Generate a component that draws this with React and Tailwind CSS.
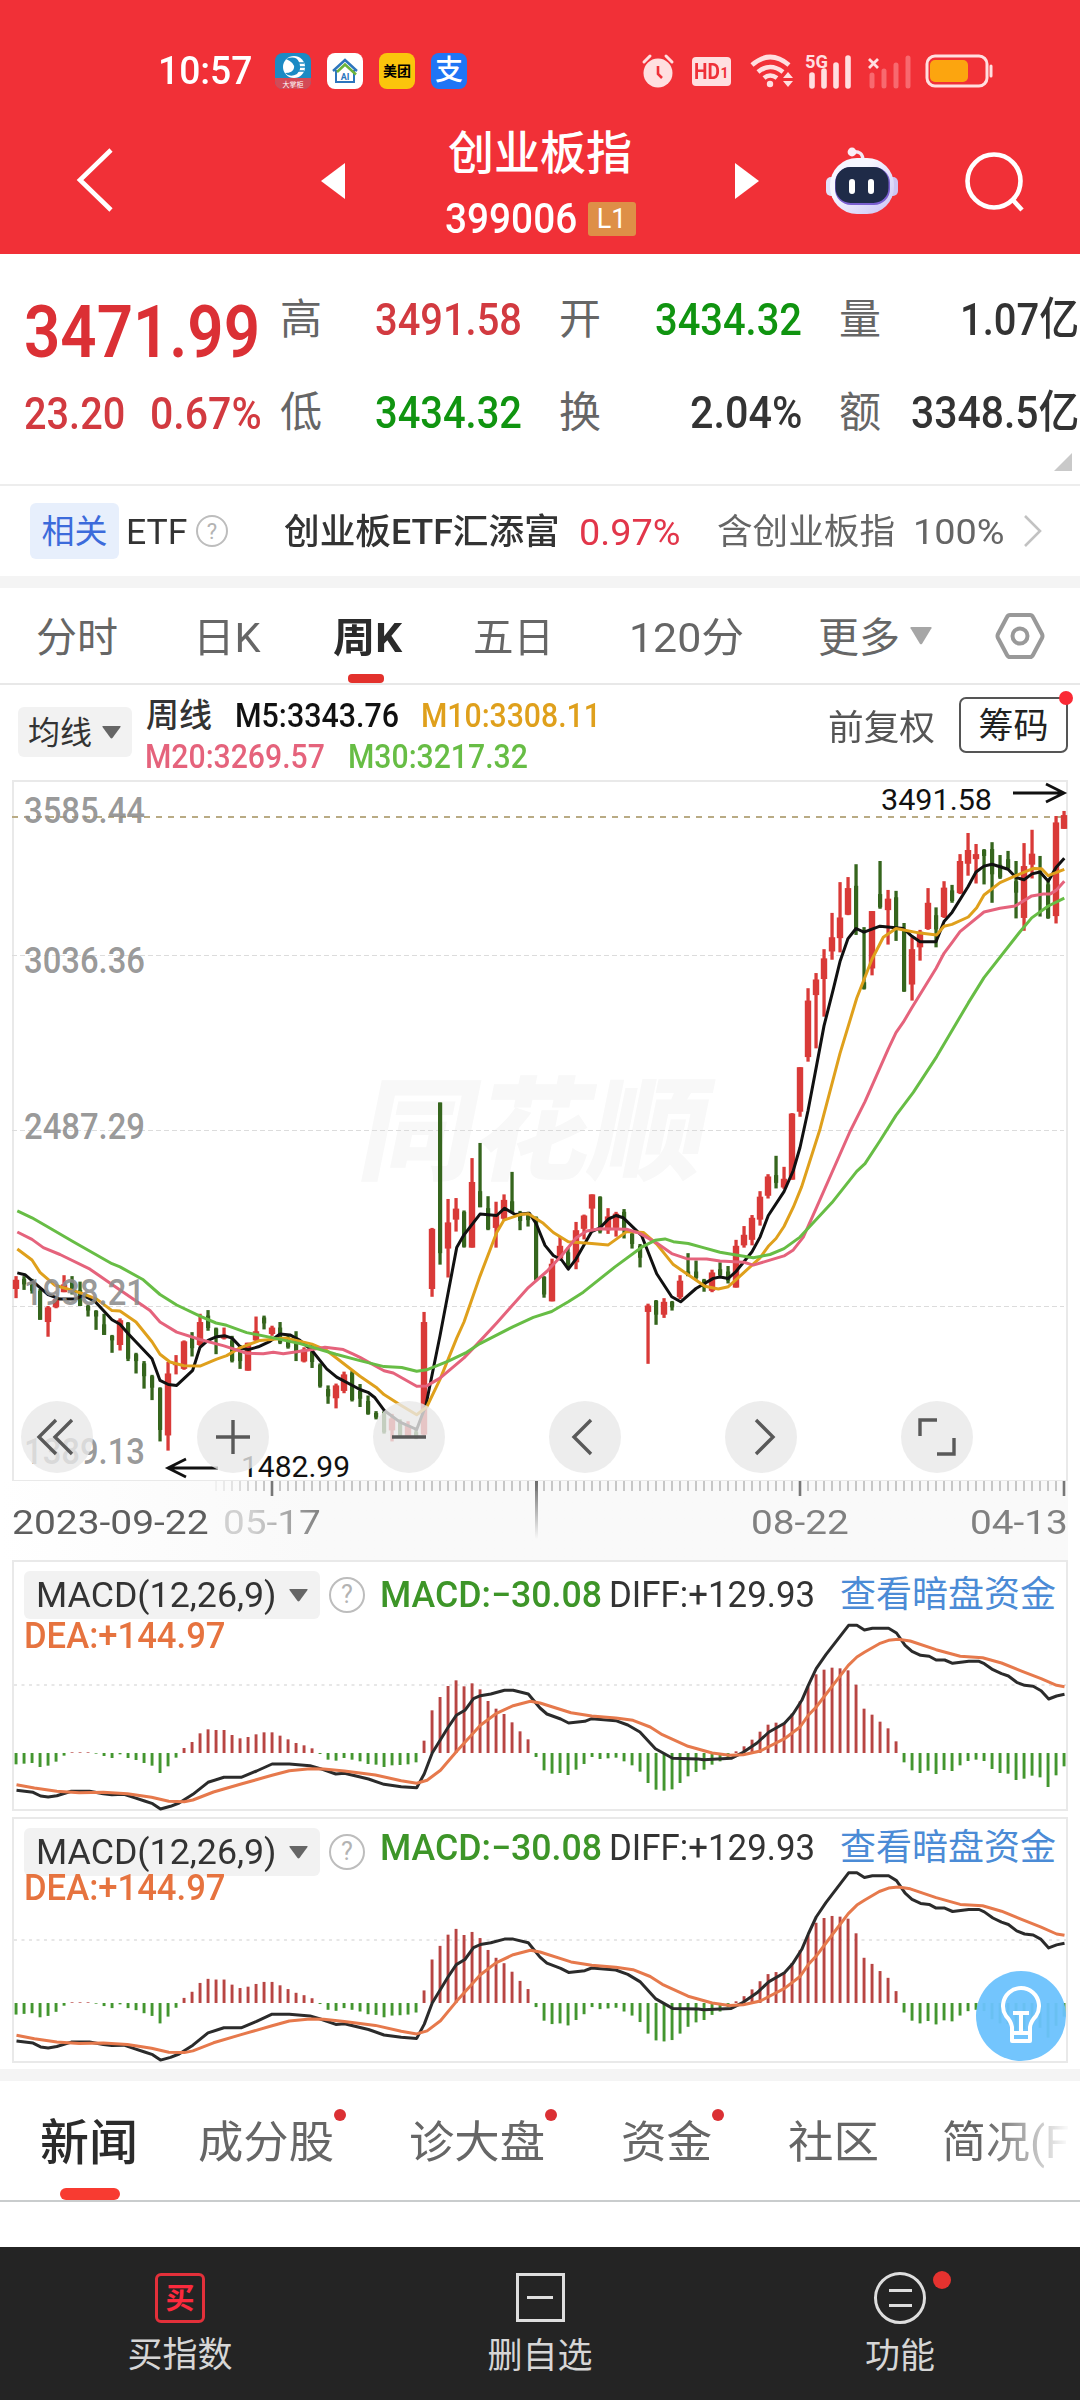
import React, { useLayoutEffect, useRef, useState } from 'react';
import clsx from 'clsx';

// [high, bodyTop, bodyBottom, low, up?] per week, in plot units
const CANDLES = [
  [1100, 1108, 1128, 1148, 1], [1100, 1106, 1118, 1130, 0], [1106, 1118, 1132, 1138, 0], [1128, 1132, 1195, 1195, 0],
  [1165, 1168, 1200, 1232, 1], [1148, 1150, 1168, 1170, 1], [1098, 1118, 1135, 1135, 1], [1100, 1112, 1132, 1140, 0],
  [1112, 1130, 1165, 1165, 0], [1163, 1165, 1175, 1188, 0], [1174, 1176, 1188, 1217, 0], [1182, 1205, 1228, 1228, 0],
  [1228, 1230, 1240, 1267, 0], [1192, 1196, 1250, 1262, 1], [1200, 1202, 1280, 1285, 0], [1267, 1270, 1285, 1312, 0],
  [1285, 1290, 1318, 1345, 0], [1315, 1318, 1343, 1370, 0], [1342, 1344, 1435, 1460, 0], [1287, 1312, 1447, 1480, 1],
  [1272, 1290, 1294, 1314, 1], [1240, 1242, 1302, 1304, 1], [1222, 1234, 1257, 1275, 0], [1182, 1200, 1250, 1252, 1],
  [1174, 1186, 1213, 1219, 0], [1212, 1214, 1230, 1270, 0], [1212, 1228, 1236, 1238, 1], [1230, 1240, 1285, 1288, 0],
  [1250, 1258, 1285, 1302, 0], [1245, 1245, 1306, 1306, 1], [1188, 1220, 1240, 1242, 1], [1186, 1190, 1203, 1216, 0],
  [1208, 1212, 1226, 1230, 1], [1200, 1212, 1245, 1248, 0], [1226, 1240, 1255, 1258, 0], [1220, 1240, 1268, 1285, 0],
  [1255, 1260, 1286, 1288, 1], [1248, 1265, 1287, 1300, 0], [1290, 1293, 1340, 1343, 0], [1338, 1346, 1362, 1378, 0],
  [1334, 1338, 1366, 1388, 1], [1308, 1314, 1350, 1355, 1], [1306, 1310, 1370, 1373, 0], [1335, 1350, 1367, 1385, 0],
  [1360, 1372, 1400, 1402, 0], [1394, 1398, 1408, 1412, 0], [1394, 1396, 1440, 1443, 0], [1400, 1410, 1436, 1460, 1],
  [1412, 1420, 1447, 1449, 0], [1416, 1425, 1450, 1452, 1], [1430, 1440, 1452, 1455, 0], [1178, 1200, 1445, 1447, 1],
  [995, 997, 1128, 1145, 1], [722, 722, 1050, 1075, 0], [932, 983, 1040, 1103, 1], [930, 953, 977, 1003, 1],
  [957, 960, 1036, 1038, 0], [843, 895, 1038, 1038, 1], [810, 915, 950, 950, 0], [926, 952, 998, 1000, 0],
  [938, 965, 995, 1038, 1], [922, 934, 975, 980, 1], [873, 937, 962, 962, 0], [958, 962, 980, 1000, 0],
  [960, 965, 978, 992, 0], [970, 972, 1108, 1110, 0], [1100, 1102, 1140, 1147, 0], [1062, 1073, 1155, 1155, 1],
  [1014, 1034, 1062, 1064, 1], [1038, 1048, 1075, 1080, 0], [982, 1000, 1070, 1085, 1], [966, 968, 997, 1020, 1],
  [922, 922, 953, 1000, 1], [926, 928, 1003, 1007, 0], [952, 970, 1000, 1008, 1], [960, 964, 995, 1014, 1],
  [954, 960, 1000, 1018, 0], [1000, 1008, 1030, 1040, 0], [1030, 1034, 1060, 1081, 0], [1160, 1164, 1178, 1291, 1],
  [1152, 1154, 1184, 1206, 0], [1148, 1156, 1184, 1191, 1], [1154, 1156, 1168, 1175, 0], [1098, 1110, 1146, 1150, 1],
  [1050, 1090, 1100, 1100, 0], [1066, 1090, 1104, 1108, 0], [1106, 1108, 1124, 1134, 0], [1086, 1092, 1132, 1135, 1],
  [1070, 1085, 1098, 1104, 0], [1078, 1090, 1110, 1116, 0], [1021, 1034, 1125, 1125, 1], [991, 1010, 1033, 1038, 1],
  [967, 973, 1021, 1033, 1], [915, 927, 977, 990, 1], [878, 883, 925, 931, 1], [838, 880, 897, 909, 0],
  [862, 888, 907, 910, 1], [745, 746, 890, 890, 1], [645, 645, 742, 753, 1], [473, 500, 623, 633, 1],
  [440, 454, 488, 604, 1], [388, 408, 453, 535, 1], [309, 362, 393, 411, 1], [242, 319, 364, 395, 1],
  [231, 255, 313, 314, 1], [203, 250, 345, 357, 0], [340, 460, 474, 476, 0], [305, 305, 430, 445, 1],
  [196, 268, 297, 300, 0], [259, 278, 303, 378, 1], [261, 275, 345, 370, 0], [331, 345, 480, 481, 0],
  [362, 388, 465, 500, 1], [346, 350, 384, 413, 1], [255, 287, 344, 346, 1], [297, 314, 345, 384, 0],
  [240, 254, 318, 320, 1], [248, 260, 283, 287, 0], [181, 196, 266, 268, 1], [135, 172, 202, 228, 1],
  [159, 181, 192, 245, 1], [170, 172, 185, 247, 0], [155, 170, 225, 287, 0], [183, 204, 232, 235, 0],
  [174, 192, 212, 214, 0], [196, 240, 265, 321, 0], [157, 207, 320, 348, 1], [128, 180, 204, 234, 1],
  [185, 218, 224, 317, 0], [240, 247, 320, 322, 0], [98, 112, 316, 332, 1], [87, 96, 126, 126, 1],
];

const MA_LINES = [
  {
    color: '#111111',
    points: '52,1093 75,1097 120,1125 144,1140 180,1150 225,1150 250,1142 285,1155 336,1195 360,1205 384,1225 456,1280 480,1327 505,1336 530,1338 578,1305 600,1255 624,1240 650,1232 675,1230 696,1235 725,1257 745,1260 775,1254 810,1242 840,1226 870,1228 900,1240 936,1262 980,1302 1010,1320 1080,1347 1104,1353 1125,1365 1152,1392 1200,1418 1250,1434 1278,1380 1320,1230 1370,1038 1392,1010 1440,965 1490,968 1514,952 1545,966 1588,963 1608,985 1635,1033 1660,1055 1685,1065 1705,1085 1728,1063 1775,1003 1800,995 1825,976 1848,968 1870,973 1925,1012 1970,1095 2015,1145 2042,1156 2088,1127 2140,1105 2160,1102 2185,1105 2208,1090 2256,1047 2280,1015 2305,968 2352,916 2380,870 2400,820 2424,740 2450,640 2472,555 2500,475 2520,415 2544,365 2568,343 2592,351 2640,338 2710,343 2736,360 2760,372 2808,372 2832,328 2856,308 2904,252 2928,220 2952,207 2976,203 3024,214 3048,232 3072,237 3096,224 3120,220 3145,240 3168,210 3193,190',
  },
  {
    color: '#dfa01c',
    points: '52,1041 96,1065 120,1092 165,1120 240,1136 290,1150 336,1175 360,1176 408,1200 456,1243 480,1270 510,1287 552,1295 600,1296 650,1281 680,1273 720,1256 780,1240 860,1235 936,1248 980,1262 1080,1318 1128,1342 1152,1358 1200,1380 1250,1402 1280,1385 1320,1325 1370,1235 1392,1200 1440,1100 1490,1005 1512,978 1560,966 1585,964 1630,985 1660,1005 1705,1025 1775,1029 1825,1032 1880,1003 1930,1005 1970,1030 2020,1075 2060,1095 2115,1122 2155,1128 2185,1123 2220,1100 2280,1060 2305,1035 2328,1018 2352,992 2380,950 2405,905 2460,780 2520,615 2570,495 2616,410 2650,362 2688,343 2760,353 2810,357 2832,338 2856,334 2905,318 2930,298 2952,270 3000,243 3048,228 3100,212 3125,213 3145,228 3193,214',
  },
  {
    color: '#e5637c',
    points: '52,1004 96,1020 130,1038 180,1053 270,1085 360,1130 450,1175 480,1200 530,1222 600,1238 672,1252 740,1268 790,1269 820,1266 850,1269 936,1260 975,1255 1030,1260 1060,1270 1080,1277 1152,1306 1180,1311 1250,1340 1280,1339 1320,1322 1392,1278 1425,1253 1490,1202 1585,1125 1640,1090 1685,1055 1728,1017 1760,1002 1800,997 1880,998 1920,1007 1970,1028 2015,1051 2060,1062 2120,1063 2160,1067 2232,1070 2260,1076 2352,1056 2380,1043 2410,1015 2450,950 2550,785 2595,720 2665,605 2688,570 2710,547 2736,515 2808,430 2832,397 2856,374 2880,350 2952,307 3000,299 3045,294 3095,272 3130,268 3150,268 3168,260 3193,240',
  },
  {
    color: '#67bd45',
    points: '52,958 96,973 144,993 220,1025 336,1073 360,1080 430,1108 480,1140 530,1163 600,1187 648,1202 680,1207 740,1223 830,1236 900,1247 1008,1270 1080,1284 1152,1297 1205,1299 1250,1307 1280,1304 1345,1285 1400,1266 1440,1247 1540,1210 1600,1190 1655,1177 1705,1156 1750,1135 1845,1080 1925,1037 1965,1022 1995,1019 2020,1025 2065,1029 2110,1038 2160,1048 2208,1054 2260,1060 2310,1053 2352,1040 2400,1015 2496,940 2570,872 2595,855 2640,805 2688,750 2740,700 2810,622 2905,505 2952,450 3060,350 3095,320 3145,294 3193,277',
  },
];

const MACD_BARS = [
  -34, -32, -30, -42, -38, -26, -8, 2, 2, 2, -2, -9, -15, -4, -15, -21, -30, -38, -60, -40, -14, 15, 33, 59, 71, 69, 69, 54, 44, 48,
  56, 62, 62, 52, 41, 30, 23, 14, -3, -20, -23, -15, -20, -25, -33, -35, -42, -37, -36, -34, -28, 37, 128, 168, 201, 218, 200, 209,
  191, 156, 133, 117, 92, 65, 41, -12, -52, -62, -60, -66, -50, -33, -12, -18, -16, -14, -25, -37, -56, -90, -110, -113, -109, -90,
  -70, -57, -50, -35, -25, -12, 5, 20, 40, 64, 85, 91, 90, 118, 155, 200, 236, 250, 256, 254, 248, 205, 133, 115, 94, 74, 35, -28,
  -52, -60, -53, -63, -51, -54, -37, -24, -20, -24, -48, -60, -62, -81, -77, -68, -73, -102, -67, -40,
];

const DIFF =
  '48,720 96,726 118,737 140,740 165,736 207,723 260,723 300,730 325,733 360,732 390,742 420,752 443,760 466,776 495,768 520,758 560,732 604,696 650,681 700,681 745,662 790,641 840,641 900,646 930,655 975,671 1000,669 1070,686 1115,702 1165,709 1210,712 1232,670 1255,608 1300,533 1325,495 1350,480 1375,445 1395,436 1425,431 1465,420 1490,420 1534,431 1568,473 1588,491 1628,506 1651,518 1698,513 1718,505 1788,511 1823,524 1858,545 1903,595 1953,624 2028,626 2043,628 2123,624 2158,606 2198,578 2233,545 2278,519 2303,490 2328,450 2347,405 2370,355 2398,313 2464,225 2488,225 2510,239 2533,234 2580,234 2603,248 2628,285 2648,303 2673,315 2698,318 2718,329 2743,329 2766,339 2813,333 2843,333 2858,340 2883,358 2908,370 2928,377 2952,396 2975,405 3000,408 3023,421 3045,446 3068,437 3091,432';

const DEA =
  '48,703 100,713 165,723 230,727 300,726 370,730 440,741 490,753 535,754 560,749 620,725 700,701 790,675 840,661 900,655 940,656 1000,662 1090,674 1165,691 1210,699 1240,690 1279,660 1325,604 1395,525 1440,490 1490,466 1540,453 1568,458 1658,487 1718,497 1788,503 1838,510 1888,530 1923,553 1998,588 2068,608 2118,615 2158,613 2208,602 2278,565 2323,530 2347,495 2370,470 2418,405 2463,345 2488,320 2510,306 2553,280 2580,270 2608,267 2643,272 2718,298 2788,318 2853,322 2908,338 2968,363 3023,385 3068,405 3091,409';

const UP = '#d93a38';
const DOWN = '#35651d';

function project(points, fx, fy) {
  return points
    .split(' ')
    .map((p) => {
      const [x, y] = p.split(',').map(Number);
      return `${fx(x).toFixed(1)},${fy(y).toFixed(1)}`;
    })
    .join(' ');
}

// Squeezes or stretches a single line of text to the width of its box.
function Fit({ className, children }) {
  const box = useRef(null);
  const text = useRef(null);
  const [scale, setScale] = useState(1);

  useLayoutEffect(() => {
    setScale(box.current.clientWidth / text.current.offsetWidth);
  }, [children]);

  return (
    <div ref={box} className={clsx('shrink-0 whitespace-nowrap flex', className)}>
      <span ref={text} className="inline-block shrink-0 origin-left" style={{ transform: `scaleX(${scale})` }}>
        {children}
      </span>
    </div>
  );
}

function Caret({ className }) {
  return (
    <svg viewBox="0 0 20 14" className={className} preserveAspectRatio="none">
      <path d="M1 0h18q1 0 .5 1L11 13q-1 1-2 0L.5 1Q0 0 1 0Z" fill="currentColor" />
    </svg>
  );
}

function Help({ className }) {
  return (
    <div className={clsx('shrink-0 rounded-full border-2 border-[#bdbdbd] text-[#b3b3b3] flex items-center justify-center', className)}>
      ?
    </div>
  );
}

function StatusBar() {
  return (
    <div className="mt-[48px] h-[46px] flex items-center text-white">
      <Fit className="ml-[158px] w-[94px] text-[38px] leading-[46px] font-medium">10:57</Fit>
      <svg width="36" height="36" viewBox="0 0 36 36" className="ml-[23px]">
        <rect width="36" height="36" rx="8" fill="#1b8ac4" />
        <path d="M0 25h36v3q0 8-8 8H8q-8 0-8-8Z" fill="#d34a56" />
        <circle cx="19" cy="14" r="11" fill="#fff" />
        <path d="M11 6q10-4 13 3t-2 12q-7 4-12-1 8 0 9-5t-8-9Z" fill="#1b8ac4" />
        <path d="M22 10h7M22 14h8M21 18h8" stroke="#1b8ac4" strokeWidth="1.4" />
        <text x="18" y="34" fontSize="7" textAnchor="middle" fill="#fff">大掌柜</text>
      </svg>
      <svg width="36" height="36" viewBox="0 0 36 36" className="ml-[16px]">
        <rect width="36" height="36" rx="8" fill="#fff" />
        <path d="M9 17v12h18V17" fill="none" stroke="#2c75bd" strokeWidth="2" />
        <path d="m6 18 12-11 12 11" fill="none" stroke="#2c75bd" strokeWidth="2.4" />
        <path d="m10 19 8-7.5 11 10" fill="none" stroke="#6cb43c" strokeWidth="2.6" />
        <text x="18" y="27" fontSize="9" fontWeight="700" textAnchor="middle" fill="#2c75bd">AI</text>
      </svg>
      <div className="ml-[16px] w-[36px] h-[36px] rounded-[8px] bg-[#fbc50c] text-black text-[14px] font-bold flex items-center justify-center">
        美团
      </div>
      <div className="ml-[16px] w-[36px] h-[36px] rounded-[8px] bg-[#1f75f5] text-[28px] leading-[34px] font-medium flex items-center justify-center">
        支
      </div>
      <svg width="34" height="36" viewBox="0 0 34 36" className="ml-[174px] text-[#ffdfe0]">
        <circle cx="17" cy="20" r="14.5" fill="currentColor" />
        <path d="M3 9 9 3M31 9l-6-6" stroke="currentColor" strokeWidth="3" strokeLinecap="round" />
        <path d="M17 13v8l4 4" fill="none" stroke="#ef3038" strokeWidth="2.6" />
      </svg>
      <div className="ml-[17px] w-[39px] h-[29px] rounded-[4px] bg-[#ffdfe0] text-[#ef3038] text-[22px] leading-[29px] font-bold flex items-center justify-center">
        <Fit className="w-[26px]">HD</Fit>
        <span className="text-[14px] pt-[5px]">1</span>
      </div>
      <svg width="46" height="36" viewBox="0 0 46 36" className="ml-[19px] text-[#ffdfe0]">
        <path d="M2 12q18-16 37 0M8 19q12-10 25 0M14 25q6-5 13 0" fill="none" stroke="currentColor" strokeWidth="4.6" />
        <circle cx="20" cy="31" r="3.2" fill="currentColor" />
        <path d="m33 25 5-6 5 6ZM33 28l5 6 5-6Z" fill="currentColor" />
      </svg>
      <svg width="48" height="36" viewBox="0 0 48 36" className="ml-[9px] overflow-visible text-[#ffdfe0]">
        <text x="0" y="15" fontSize="19" fontWeight="700" fill="currentColor" textLength="23" lengthAdjust="spacingAndGlyphs">5G</text>
        <path d="M7 33V22M19 33V18M31 33V12M43 33V5" stroke="currentColor" strokeWidth="5.6" strokeLinecap="round" />
      </svg>
      <svg width="46" height="36" viewBox="0 0 46 36" className="ml-[14px] text-[#ffdfe0]">
        <path d="m2 6 9 9M11 6l-9 9" stroke="currentColor" strokeWidth="2.8" />
        <path d="M5 33V22M17 33V18M29 33V12M41 33V5" stroke="#f8696f" strokeWidth="5" strokeLinecap="round" />
      </svg>
      <svg width="70" height="36" viewBox="0 0 70 36" className="ml-[12px]">
        <rect x="2" y="3" width="60" height="30" rx="8" fill="none" stroke="#ffdfe0" strokeWidth="3" />
        <rect x="5" y="7" width="38" height="22" rx="5" fill="#fca50f" />
        <path d="M66 13v10" stroke="#ffdfe0" strokeWidth="3" strokeLinecap="round" />
      </svg>
    </div>
  );
}

function Robot() {
  return (
    <svg width="76" height="72" viewBox="0 0 76 72" className="ml-[65px] -mt-[4px]">
      <defs>
        <linearGradient id="shell" x1="0" y1="0" x2="1" y2="1">
          <stop offset="0.35" stopColor="#f6f6ff" />
          <stop offset="1" stopColor="#c9c2f5" />
        </linearGradient>
      </defs>
      <path d="M28 9q11-2 11 9" fill="none" stroke="#f3e9f5" strokeWidth="3.4" strokeLinecap="round" />
      <circle cx="28" cy="9" r="4.4" fill="#fbeef6" />
      <rect x="2" y="34" width="12" height="19" rx="5" fill="#e2e2fa" />
      <rect x="62" y="34" width="12" height="19" rx="5" fill="#cdc4f3" />
      <rect x="6" y="15" width="64" height="56" rx="27" fill="url(#shell)" />
      <rect x="11" y="24" width="55" height="38" rx="16" fill="#7a5fd0" />
      <rect x="11.5" y="24" width="53" height="36" rx="15" fill="#1f2b48" />
      <path d="M28 39v9M47 39v9" stroke="#fff" strokeWidth="6" strokeLinecap="round" />
    </svg>
  );
}

function NavBar() {
  return (
    <div className="h-[160px] pt-[14px] flex items-center text-white">
      <svg width="44" height="68" viewBox="0 0 44 68" className="ml-[73px] -mt-[3px]">
        <path d="M38 4 7 34l31 30" fill="none" stroke="currentColor" strokeWidth="4.6" />
      </svg>
      <svg width="24" height="36" viewBox="0 0 24 36" className="ml-[204px]">
        <path d="M24 0v36L0 18Z" fill="currentColor" />
      </svg>
      <div className="ml-[80px] mr-[80px] mt-[3px] w-[230px] flex flex-col items-center">
        <div className="text-[46px] leading-[46px] font-medium">创业板指</div>
        <div className="mt-[26px] h-[34px] flex items-center">
          <Fit className="w-[132px] text-[42px] leading-[34px] font-medium">399006</Fit>
          <div className="ml-[11px] w-[48px] h-[34px] rounded-[3px] bg-[#de8f47] text-[27px] leading-[34px] text-center">L1</div>
        </div>
      </div>
      <svg width="24" height="36" viewBox="0 0 24 36">
        <path d="M0 0v36l24-18Z" fill="currentColor" />
      </svg>
      <Robot />
      <svg width="66" height="66" viewBox="0 0 66 66" className="ml-[62px] mt-[3px]">
        <circle cx="32" cy="31" r="26.5" fill="none" stroke="currentColor" strokeWidth="4.6" />
        <path d="m50 49 10 11" stroke="currentColor" strokeWidth="4.6" />
      </svg>
    </div>
  );
}

function QuoteCell({ label, value, color, width }) {
  return (
    <div className="flex items-center justify-between">
      <span className="text-[42px] leading-[46px] text-[#666]">{label}</span>
      <Fit className={clsx('text-[45px] leading-[46px] font-medium', color, width)}>{value}</Fit>
    </div>
  );
}

function QuotePanel() {
  return (
    <div className="h-[232px] shrink-0 border-b-2 border-[#ededed] relative flex">
      <div className="ml-[24px] w-[240px] pt-[37px] text-[#db3035]">
        <Fit className="w-[236px] text-[73px] leading-[82px] font-semibold">3471.99</Fit>
        <div className="mt-[18px] flex gap-[25px] text-[#d23a40]">
          <Fit className="w-[101px] text-[44px] leading-[46px] font-medium">23.20</Fit>
          <Fit className="w-[112px] text-[44px] leading-[46px] font-medium">0.67%</Fit>
        </div>
      </div>
      <div className="ml-[16px] pt-[43px] grid grid-cols-[242px_243px_240px] auto-rows-[46px] gap-x-[37px] gap-y-[47px]">
        <QuoteCell label="高" value="3491.58" color="text-[#d23a40]" width="w-[147px]" />
        <QuoteCell label="开" value="3434.32" color="text-[#109410]" width="w-[147px]" />
        <QuoteCell label="量" value="1.07亿" color="text-[#333]" width="w-[119px]" />
        <QuoteCell label="低" value="3434.32" color="text-[#109410]" width="w-[147px]" />
        <QuoteCell label="换" value="2.04%" color="text-[#333]" width="w-[112px]" />
        <QuoteCell label="额" value="3348.5亿" color="text-[#333]" width="w-[168px]" />
      </div>
      <svg width="18" height="18" viewBox="0 0 18 18" className="absolute right-[8px] bottom-[13px]">
        <path d="M18 0v18H0Z" fill="#c9c9c9" />
      </svg>
    </div>
  );
}

function RelatedRow() {
  return (
    <div className="h-[90px] shrink-0 flex items-center text-[#333]">
      <div className="ml-[30px] w-[89px] h-[56px] rounded-[6px] bg-[#e7effc] text-[#3c6bdb] text-[33px] leading-[58px] text-center">相关</div>
      <Fit className="ml-[7px] w-[61px] pt-[3px] text-[35px] leading-[50px]">ETF</Fit>
      <Help className="ml-[9px] w-[32px] h-[32px] text-[22px]" />
      <Fit className="ml-[56px] w-[276px] pt-[3px] text-[35px] leading-[50px] font-medium">创业板ETF汇添富</Fit>
      <Fit className="ml-[19px] w-[102px] pt-[3px] text-[36px] leading-[50px] text-[#e2364a]">0.97%</Fit>
      <Fit className="ml-[36px] w-[178px] pt-[3px] text-[35px] leading-[50px] text-[#666]">含创业板指</Fit>
      <Fit className="ml-[18px] w-[92px] pt-[3px] text-[35px] leading-[50px] text-[#666]">100%</Fit>
      <svg width="20" height="34" viewBox="0 0 20 34" className="ml-[18px]">
        <path d="m2 2 15 15L2 32" fill="none" stroke="#c2c2c2" strokeWidth="2.6" />
      </svg>
    </div>
  );
}

function PeriodTabs() {
  return (
    <div className="h-[97px] shrink-0 border-b-2 border-[#e8e8e8] flex text-[41px] leading-[100px] text-[#666]">
      <span className="ml-[36px] w-[83px]">分时</span>
      <Fit className="ml-[74px] w-[68px]">日K</Fit>
      <div className="ml-[72px] w-[69px] relative text-[#2b2b2b] font-bold">
        <Fit className="w-[69px]">周K</Fit>
        <div className="absolute left-[15px] bottom-0 w-[36px] h-[9px] rounded-[4px] bg-[#e3312c]" />
      </div>
      <Fit className="ml-[71px] w-[81px]">五日</Fit>
      <Fit className="ml-[75px] w-[115px]">120分</Fit>
      <span className="ml-[74px] w-[83px]">更多</span>
      <Caret className="ml-[9px] mt-[39px] w-[22px] h-[18px] text-[#a6a6a6]" />
      <svg width="50" height="48" viewBox="0 0 50 48" className="ml-[63px] mt-[24px]">
        <path d="M15 3h20q2 0 3 2l9 17q1 2 0 4l-9 17q-1 2-3 2H15q-2 0-3-2L3 26q-1-2 0-4l9-17q1-2 3-2Z" fill="none" stroke="#999" strokeWidth="4" />
        <circle cx="25" cy="24" r="7.5" fill="none" stroke="#999" strokeWidth="4" />
      </svg>
    </div>
  );
}

function MaBar() {
  return (
    <div className="h-[93px] shrink-0 flex">
      <div className="ml-[18px] mt-[22px] w-[114px] h-[50px] rounded-[6px] bg-[#f2f2f2] text-[#333] text-[32px] leading-[50px] flex items-center">
        <span className="ml-[10px] pt-[2px]">均线</span>
        <Caret className="ml-[10px] w-[19px] h-[13px] text-[#666]" />
      </div>
      <div className="ml-[14px] mt-[10px] w-[460px] text-[33px] leading-[41px]">
        <div className="flex font-medium text-[#333]">
          <Fit className="w-[66px]">周线</Fit>
          <Fit className="ml-[23px] w-[164px] text-[#111]">M5:3343.76</Fit>
          <Fit className="ml-[22px] w-[180px] text-[#dfa01c]">M10:3308.11</Fit>
        </div>
        <div className="flex font-medium">
          <Fit className="-ml-[1px] w-[180px] text-[#e5637c]">M20:3269.57</Fit>
          <Fit className="ml-[23px] w-[180px] text-[#67bd45]">M30:3217.32</Fit>
        </div>
      </div>
      <Fit className="ml-[222px] mt-[19px] w-[107px] text-[35px] leading-[50px] text-[#555]">前复权</Fit>
      <div className="relative ml-[24px] mt-[12px] w-[109px] h-[56px] rounded-[7px] border-2 border-[#555] text-[#222] text-[35px] leading-[56px] text-center">
        筹码
        <div className="absolute -right-[7px] -top-[8px] w-[14px] h-[14px] rounded-full bg-[#fa2a35]" />
      </div>
    </div>
  );
}

const AXIS = [
  ['3585.44', 822], ['3036.36', 972], ['2487.29', 1138], ['1938.21', 1304], ['1389.13', 1463],
];

const TOOLS = [
  'M-1-17-18 0-1 17M15-17-2 0 15 17',
  'M-17 0h34M0-17v34',
  'M-17 0h34',
  'M6-17-11 0 6 17',
  'M-5-17 12 0-5 17',
  'M-17-1v-16H0M17 1v16H0',
];

function KLineChart() {
  const y = (v) => 770 + v * 0.4592;
  return (
    <svg width="1080" height="705" viewBox="0 777 1080 705" className="block">
      <text x="538" y="1170" fontSize="112" fontWeight="900" fill="#f8f8f8" textAnchor="middle" textLength="345" transform="translate(228 0) skewX(-11.5)" lengthAdjust="spacingAndGlyphs">
        同花顺
      </text>
      <rect x="13" y="780" width="1054" height="700" fill="none" stroke="#e9e9e9" strokeWidth="2" />
      <path d="M12 816H1064" stroke="#b9ab84" strokeWidth="1.8" strokeDasharray="6 6" />
      {[954.5, 1129.5, 1305.5].map((v) => (
        <path key={v} d={`M12 ${v}H1064`} stroke="#dcdcdc" strokeWidth="1.2" strokeDasharray="5 3" />
      ))}
      {CANDLES.map(([high, top, bottom, low, up], i) => (
        <g key={i} fill={up ? UP : DOWN}>
          <rect x={14.4 + i * 8} y={y(high)} width="3.3" height={y(low) - y(high)} />
          <rect x={up ? 12.8 + i * 8 : 14 + i * 8} y={y(top)} width={up ? 6.4 : 4.2} height={y(bottom) - y(top)} />
        </g>
      ))}
      {MA_LINES.map((line) => (
        <polyline
          key={line.color}
          points={project(line.points, (x) => x / 3, y)}
          fill="none"
          stroke={line.color}
          strokeWidth="3"
          strokeLinejoin="round"
        />
      ))}
      <g fontSize="36" fontWeight="500" fill="#8c8c8c" fillOpacity="0.9">
        {AXIS.map(([label, base]) => (
          <text key={label} x="24" y={base} textLength="121" lengthAdjust="spacingAndGlyphs">{label}</text>
        ))}
      </g>
      <g fontSize="29" fill="#111">
        <text x="881" y="809" textLength="111" lengthAdjust="spacingAndGlyphs">3491.58</text>
        <text x="241" y="1476" textLength="109" lengthAdjust="spacingAndGlyphs">1482.99</text>
      </g>
      <path d="M1013 792h50M1046 783l18 9-18 9M218 1467h-49M186 1458l-18 9 18 9" fill="none" stroke="#111" strokeWidth="2.8" />
      {TOOLS.map((d, i) => (
        <g key={d} transform={`translate(${57 + i * 176} 1436)`}>
          <circle r="36" fill="#e8e8e8" fillOpacity="0.8" />
          <path d={d} fill="none" stroke="#595959" strokeWidth="3.4" />
        </g>
      ))}
    </svg>
  );
}

function TimeAxis() {
  const ticks = Array.from({ length: 107 }, (_, i) => 216 + i * 8);
  return (
    <div className="h-[79px] shrink-0 mr-[12px] bg-linear-to-r from-white to-[#f9f9f9] to-30%">
      <svg width="1080" height="24" viewBox="0 0 1080 24" className="block overflow-visible">
        <defs>
          <linearGradient id="cursor" x1="0" y1="0" x2="0" y2="1">
            <stop offset="0" stopColor="#6b6b6b" />
            <stop offset="1" stopColor="#6b6b6b" stopOpacity="0" />
          </linearGradient>
        </defs>
        {ticks.map((x) => (
          <path key={x} d={`M${x} 0v10`} stroke="#a5a5a5" strokeWidth="1.2" strokeOpacity={Math.min(1, (x - 205) / 60)} />
        ))}
        <path d="M272 0v15M800 0v15M1064 0v15" stroke="#777" strokeWidth="2.6" />
        <rect x="535" y="0" width="3" height="58" fill="url(#cursor)" />
      </svg>
      <div className="flex text-[34px] leading-[34px] text-[#808080]">
        <Fit className="ml-[12px] w-[197px] text-[#5e5e5e]">2023-09-22</Fit>
        <Fit className="ml-[14px] w-[98px] mask-linear-90 mask-linear-from-30% mask-linear-to-100% mask-linear-from-black/35 mask-linear-to-black">05-17</Fit>
        <Fit className="ml-[430px] w-[98px]">08-22</Fit>
        <Fit className="ml-[121px] w-[98px]">04-13</Fit>
      </div>
    </div>
  );
}

function MacdPanel({ height, zero, guide, zoom, valueTop, deaTop }) {
  return (
    <div className="relative shrink-0 mx-[12px]">
      <svg width="1056" height={height} viewBox={`12 0 1056 ${height}`} className="absolute inset-0">
        <rect x="13" y="1" width="1054" height={height - 2} fill="none" stroke="#e9e9e9" strokeWidth="2" />
        <path d={`M14 ${guide}H1066`} stroke="#e0e0e0" strokeWidth="1.6" strokeDasharray="3 4.5" />
        {MACD_BARS.map((v, i) => {
          const h = (Math.abs(v) / 3) * zoom;
          return <rect key={i} x={14.6 + i * 8} y={v > 0 ? zero - h : zero} width="2.9" height={h} fill={v > 0 ? '#b84543' : '#43962f'} />;
        })}
        <polyline points={project(DIFF, (x) => x * 0.3444, (v) => zero + ((v - 608) / 3) * zoom)} fill="none" stroke="#2b2b2b" strokeWidth="3" strokeLinejoin="round" />
        <polyline points={project(DEA, (x) => x * 0.3444, (v) => zero + ((v - 608) / 3) * zoom)} fill="none" stroke="#e6794c" strokeWidth="3" strokeLinejoin="round" />
      </svg>
      <div className="relative pt-[11px] flex">
        <div className="ml-[12px] w-[296px] h-[48px] rounded-[6px] bg-[#f2f2f2] text-[#333] text-[35px] leading-[49px] flex items-center">
          <Fit className="ml-[12px] w-[241px]">MACD(12,26,9)</Fit>
          <Caret className="ml-[12px] w-[19px] h-[13px] text-[#666]" />
        </div>
        <Help className="ml-[9px] mt-[6px] w-[36px] h-[36px] text-[25px]" />
        <div className={clsx('flex text-[36px] leading-[48px]', valueTop)}>
          <Fit className="ml-[15px] w-[222px] font-medium text-[#3d9528]">MACD:−30.08</Fit>
          <Fit className="ml-[7px] w-[206px] text-[#333]">DIFF:+129.93</Fit>
          <Fit className="ml-[25px] w-[216px] text-[#4b8bd6]">查看暗盘资金</Fit>
        </div>
      </div>
      <Fit className={clsx('absolute left-[12px] w-[202px] text-[36px] leading-[40px] font-medium text-[#e6733f]', deaTop)}>DEA:+144.97</Fit>
    </div>
  );
}

function NewsTabs() {
  const tabs = [
    ['成分股', 'ml-[60px] w-[136px]', true],
    ['诊大盘', 'ml-[75px] w-[136px]', true],
    ['资金', 'ml-[76px] w-[91px]', true],
    ['社区', 'ml-[76px] w-[91px]', false],
  ];
  return (
    <div className="h-[121px] shrink-0 border-b-2 border-[#c9cccd] flex text-[44px] leading-[125px] text-[#666] overflow-hidden">
      <div className="ml-[40px] w-[98px] relative text-[49px] font-medium text-[#2b2b2b] whitespace-nowrap">
        新闻
        <div className="absolute left-[20px] bottom-0 w-[60px] h-[12px] rounded-full bg-[#f83b31]" />
      </div>
      {tabs.map(([name, box, dot]) => (
        <div key={name} className={clsx('relative', box)}>
          <Fit className="w-full">{name}</Fit>
          {dot && <div className="absolute -right-[12px] top-[28px] w-[12px] h-[12px] rounded-full bg-[#db3034]" />}
        </div>
      ))}
      <div className="ml-[63px] w-[128px] overflow-hidden whitespace-nowrap mask-r-from-35% mask-r-to-100%">
        简况(F10)
      </div>
    </div>
  );
}

function BottomBar() {
  return (
    <div className="h-[153px] shrink-0 mt-auto bg-[#242424] grid grid-cols-3 text-[35px] leading-[40px] text-[#d6d6d6]">
      <div className="flex flex-col items-center pt-[26px]">
        <div className="w-[50px] h-[50px] rounded-[6px] border-[3px] border-[#e3303a] text-[#fb2a3d] text-[29px] leading-[46px] font-bold text-center">买</div>
        <span className="mt-[13px]">买指数</span>
      </div>
      <div className="flex flex-col items-center pt-[26px]">
        <div className="w-[49px] h-[49px] border-[3px] border-[#dedede] flex items-center justify-center">
          <div className="w-[26px] h-[3px] bg-[#dedede]" />
        </div>
        <span className="mt-[15px]">删自选</span>
      </div>
      <div className="flex flex-col items-center pt-[25px]">
        <div className="relative w-[52px] h-[52px] rounded-full border-[3px] border-[#dedede] flex flex-col gap-[12px] items-center justify-center">
          <div className="w-[23px] h-[3px] bg-[#dedede]" />
          <div className="w-[23px] h-[3px] bg-[#dedede]" />
          <div className="absolute -right-[28px] -top-[4px] w-[18px] h-[18px] rounded-full bg-[#e5322f]" />
        </div>
        <span className="mt-[13px]">功能</span>
      </div>
    </div>
  );
}

export default function App() {
  return (
    <div className="relative w-[1080px] h-[2400px] overflow-hidden bg-white flex flex-col font-['Roboto','Noto_Sans_CJK_SC',sans-serif]">
      <div className="h-[254px] shrink-0 bg-[#f13037] overflow-hidden">
        <StatusBar />
        <NavBar />
      </div>
      <QuotePanel />
      <RelatedRow />
      <div className="h-[12px] shrink-0 bg-[#f4f4f4]" />
      <PeriodTabs />
      <MaBar />
      <div className="h-[703px] shrink-0">
        <KLineChart />
      </div>
      <TimeAxis />
      <div className="h-[257px] shrink-0">
        <MacdPanel height={251} zero={193} guide={125} zoom={1} valueTop="mt-0" deaTop="top-[56px]" />
      </div>
      <div className="h-[252px] shrink-0">
        <MacdPanel height={246} zero={186} guide={123} zoom={1.02} valueTop="-mt-[4px]" deaTop="top-[51px]" />
      </div>
      <div className="h-[12px] shrink-0 bg-[#f4f4f4]" />
      <NewsTabs />
      <BottomBar />

      {/* floating tips button */}
      <div className="absolute left-[976px] top-[1971px] w-[90px] h-[90px] rounded-full bg-[#6bc2fd]/95 flex items-center justify-center">
        <svg width="46" height="60" viewBox="0 0 46 60" fill="none" stroke="#fff" strokeWidth="4">
          <path d="M14 41q-1-6-6-11A18 18 0 1 1 38 30q-5 5-6 11v14H14Z" strokeLinejoin="round" />
          <path d="M14 47h18M15 27h16M23 27v19" />
        </svg>
      </div>
    </div>
  );
}
